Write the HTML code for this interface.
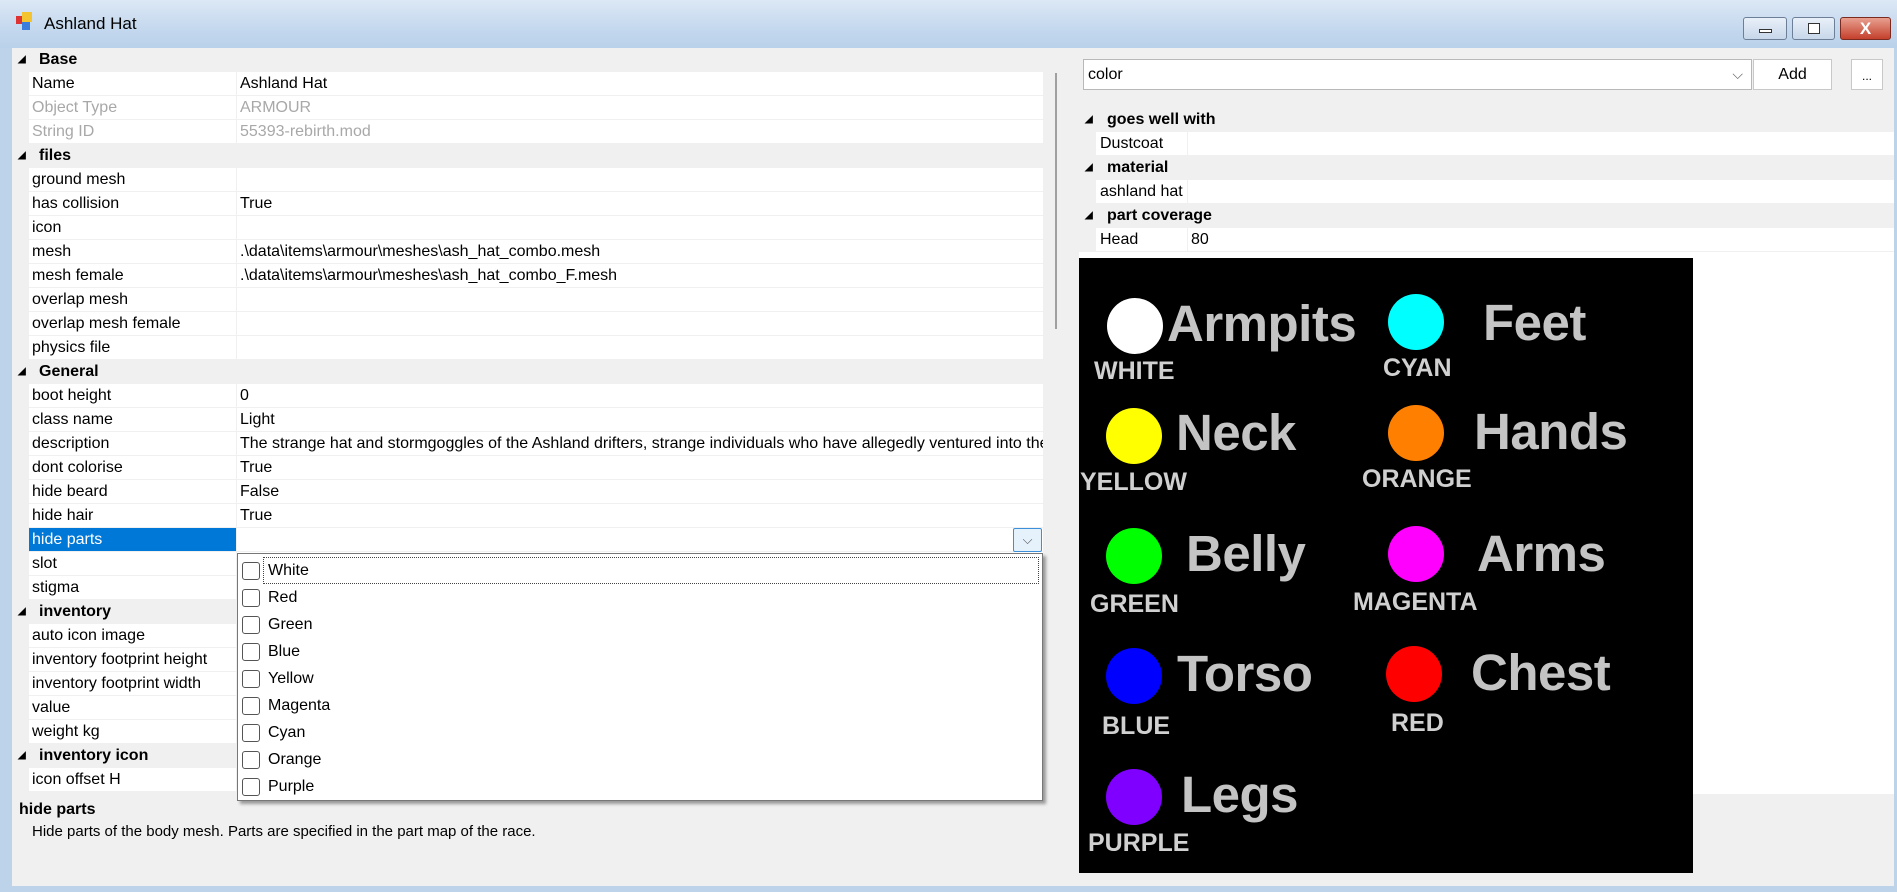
<!DOCTYPE html>
<html><head><meta charset="utf-8"><style>
*{margin:0;padding:0;box-sizing:border-box}
body{width:1897px;height:892px;overflow:hidden;background:#bcd3ea;font-family:"Liberation Sans",sans-serif;font-size:16px;color:#000;position:relative}
.a{position:absolute}
.title{left:0;top:0;width:1897px;height:48px;background:linear-gradient(#dce8f5,#c4d8ee 60%,#b9d1ea)}
.client{left:12px;top:48px;width:1882px;height:838px;background:#f0f0f0}
.row{position:absolute;left:14px;width:1029px;height:24px;line-height:23px}
.cat{background:#f0f0f0;font-weight:bold}
.cat .tri{position:absolute;left:4px;top:0;font-size:10px}
.cat .t{position:absolute;left:25px}
.prop .l{position:absolute;left:15px;width:207px;height:23px;background:#fff;padding-left:3px;white-space:nowrap;overflow:hidden}
.prop .v{position:absolute;left:223px;width:806px;height:23px;background:#fff;padding-left:3px;white-space:nowrap;overflow:hidden}
.g{color:#a8a8a8}
.rrow{position:absolute;left:1079px;width:815px;height:24px;line-height:23px}
.rrow.cat .t{left:28px}
.rrow .l{position:absolute;left:17px;width:91px;height:23px;background:#fff;padding-left:4px}
.rrow .v{position:absolute;left:109px;width:706px;height:23px;background:#fff;padding-left:3px}
.big{position:absolute;color:#c4c4c4;font-size:51px;line-height:51px;font-weight:bold;letter-spacing:-0.5px}
.sm{position:absolute;color:#d0d0d0;font-size:25px;line-height:25px;font-weight:bold}
.c{position:absolute;width:56px;height:56px;border-radius:50%}
.it{position:absolute;left:4px;height:27px;line-height:27px;padding-left:26px;font-size:16px}
.it:before{content:"";position:absolute;left:0;top:5px;width:16px;height:16px;border:1px solid #555;border-radius:3px;background:#fff}
.wb{position:absolute;top:17px;height:23px;border:1px solid #6d7f97;border-radius:3px;background:linear-gradient(#e9f0f8,#c7d7ea)}
</style></head><body>
<div class="a title"></div>
<div class="a" style="left:16px;top:16px;width:8px;height:8px;background:#d33"></div>
<div class="a" style="left:22px;top:12px;width:10px;height:10px;background:#f4c430"></div>
<div class="a" style="left:22px;top:22px;width:8px;height:8px;background:#3b7ddd"></div>
<div class="a" style="left:44px;top:14px;font-size:17px;line-height:20px">Ashland Hat</div>
<div class="wb" style="left:1743px;width:44px"><div class="a" style="left:15px;top:11px;width:13px;height:4px;border:1px solid #333;background:#fff"></div></div>
<div class="wb" style="left:1792px;width:43px"><div class="a" style="left:15px;top:5px;width:12px;height:11px;border:1px solid #333;background:#fff"></div></div>
<div class="wb" style="left:1840px;width:51px;background:linear-gradient(#e8a090,#c4402c);border-color:#7a2a1e;color:#fff;font-weight:bold;text-align:center;line-height:21px;font-size:17px">X</div>
<div class="a client"></div>

<!-- left grid -->
<div class="row cat" style="top:48px"><span class="tri">◢</span><span class="t">Base</span></div>
<div class="row prop" style="top:72px"><div class="l">Name</div><div class="v">Ashland Hat</div></div>
<div class="row prop g" style="top:96px"><div class="l">Object Type</div><div class="v">ARMOUR</div></div>
<div class="row prop g" style="top:120px"><div class="l">String ID</div><div class="v">55393-rebirth.mod</div></div>
<div class="row cat" style="top:144px"><span class="tri">◢</span><span class="t">files</span></div>
<div class="row prop" style="top:168px"><div class="l">ground mesh</div><div class="v"></div></div>
<div class="row prop" style="top:192px"><div class="l">has collision</div><div class="v">True</div></div>
<div class="row prop" style="top:216px"><div class="l">icon</div><div class="v"></div></div>
<div class="row prop" style="top:240px"><div class="l">mesh</div><div class="v">.\data\items\armour\meshes\ash_hat_combo.mesh</div></div>
<div class="row prop" style="top:264px"><div class="l">mesh female</div><div class="v">.\data\items\armour\meshes\ash_hat_combo_F.mesh</div></div>
<div class="row prop" style="top:288px"><div class="l">overlap mesh</div><div class="v"></div></div>
<div class="row prop" style="top:312px"><div class="l">overlap mesh female</div><div class="v"></div></div>
<div class="row prop" style="top:336px"><div class="l">physics file</div><div class="v"></div></div>
<div class="row cat" style="top:360px"><span class="tri">◢</span><span class="t">General</span></div>
<div class="row prop" style="top:384px"><div class="l">boot height</div><div class="v">0</div></div>
<div class="row prop" style="top:408px"><div class="l">class name</div><div class="v">Light</div></div>
<div class="row prop" style="top:432px"><div class="l">description</div><div class="v">The strange hat and stormgoggles of the Ashland drifters, strange individuals who have allegedly ventured into the</div></div>
<div class="row prop" style="top:456px"><div class="l">dont colorise</div><div class="v">True</div></div>
<div class="row prop" style="top:480px"><div class="l">hide beard</div><div class="v">False</div></div>
<div class="row prop" style="top:504px"><div class="l">hide hair</div><div class="v">True</div></div>
<div class="row prop" style="top:528px"><div class="l" style="background:#0078d7;color:#fff">hide parts</div><div class="v"></div></div>
<div class="a" style="left:1013px;top:528px;width:29px;height:24px;border:1px solid #3c8fd8;background:#e5f1fb;border-radius:2px;color:#555;text-align:center;line-height:22px;font-size:13px">⌵</div>
<div class="row prop" style="top:552px"><div class="l">slot</div><div class="v"></div></div>
<div class="row prop" style="top:576px"><div class="l">stigma</div><div class="v"></div></div>
<div class="row cat" style="top:600px"><span class="tri">◢</span><span class="t">inventory</span></div>
<div class="row prop" style="top:624px"><div class="l">auto icon image</div><div class="v"></div></div>
<div class="row prop" style="top:648px"><div class="l">inventory footprint height</div><div class="v"></div></div>
<div class="row prop" style="top:672px"><div class="l">inventory footprint width</div><div class="v"></div></div>
<div class="row prop" style="top:696px"><div class="l">value</div><div class="v"></div></div>
<div class="row prop" style="top:720px"><div class="l">weight kg</div><div class="v"></div></div>
<div class="row cat" style="top:744px"><span class="tri">◢</span><span class="t">inventory icon</span></div>
<div class="row prop" style="top:768px"><div class="l">icon offset H</div><div class="v"></div></div>

<!-- dropdown list -->
<div class="a" style="left:237px;top:553px;width:806px;height:248px;background:#fff;border:1px solid #777;box-shadow:3px 3px 3px #999">
<div class="a" style="left:25px;top:3px;width:776px;height:27px;border:1px dotted #444"></div>
<div class="it" style="top:3px">White</div>
<div class="it" style="top:30px">Red</div>
<div class="it" style="top:57px">Green</div>
<div class="it" style="top:84px">Blue</div>
<div class="it" style="top:111px">Yellow</div>
<div class="it" style="top:138px">Magenta</div>
<div class="it" style="top:165px">Cyan</div>
<div class="it" style="top:192px">Orange</div>
<div class="it" style="top:219px">Purple</div>
</div>

<div class="a" style="left:1055px;top:73px;width:2px;height:256px;background:#a0a0a0"></div>

<div class="a" style="left:19px;top:800px;font-weight:bold;line-height:20px">hide parts</div>
<div class="a" style="left:32px;top:823px;font-size:15px;line-height:18px">Hide parts of the body mesh. Parts are specified in the part map of the race.</div>

<!-- right panel -->
<div class="a" style="left:1083px;top:59px;width:669px;height:31px;background:#fff;border:1px solid #b8b8b8;line-height:29px;padding-left:4px">color<span class="a" style="right:8px;top:0;color:#666;font-size:14px">⌵</span></div>
<div class="a" style="left:1753px;top:59px;width:79px;height:31px;background:#fff;border:1px solid #c8c8c8;text-align:center;line-height:29px">Add</div>
<div class="a" style="left:1851px;top:59px;width:32px;height:31px;background:#fff;border:1px solid #c8c8c8;text-align:center;line-height:33px;font-size:12px">...</div>

<div class="a" style="left:1079px;top:252px;width:815px;height:542px;background:#fff"></div>
<div class="rrow cat" style="top:108px"><span class="tri" style="position:absolute;left:6px;font-size:10px">◢</span><span class="t" style="position:absolute">goes well with</span></div>
<div class="rrow" style="top:132px"><div class="l">Dustcoat</div><div class="v"></div></div>
<div class="rrow cat" style="top:156px"><span class="tri" style="position:absolute;left:6px;font-size:10px">◢</span><span class="t" style="position:absolute">material</span></div>
<div class="rrow" style="top:180px"><div class="l">ashland hat</div><div class="v"></div></div>
<div class="rrow cat" style="top:204px"><span class="tri" style="position:absolute;left:6px;font-size:10px">◢</span><span class="t" style="position:absolute">part coverage</span></div>
<div class="rrow" style="top:228px"><div class="l">Head</div><div class="v">80</div></div>

<!-- image -->
<div class="a" style="left:1079px;top:258px;width:614px;height:615px;background:#000">
<div class="c" style="left:28px;top:40px;background:#fff"></div>
<div class="c" style="left:309px;top:36px;background:#0ff"></div>
<div class="c" style="left:27px;top:150px;background:#ff0"></div>
<div class="c" style="left:309px;top:147px;background:#ff8000"></div>
<div class="c" style="left:27px;top:270px;background:#0f0"></div>
<div class="c" style="left:309px;top:268px;background:#f0f"></div>
<div class="c" style="left:27px;top:390px;background:#00f"></div>
<div class="c" style="left:307px;top:388px;background:#f00"></div>
<div class="c" style="left:27px;top:511px;background:#8000ff"></div>
<div class="big" style="left:88px;top:40px">Armpits</div>
<div class="big" style="left:404px;top:39px">Feet</div>
<div class="big" style="left:97px;top:149px">Neck</div>
<div class="big" style="left:395px;top:148px">Hands</div>
<div class="big" style="left:107px;top:270px">Belly</div>
<div class="big" style="left:398px;top:270px">Arms</div>
<div class="big" style="left:98px;top:390px">Torso</div>
<div class="big" style="left:392px;top:389px">Chest</div>
<div class="big" style="left:102px;top:511px">Legs</div>
<div class="sm" style="left:15px;top:101px">WHITE</div>
<div class="sm" style="left:304px;top:98px">CYAN</div>
<div class="sm" style="left:1px;top:212px">YELLOW</div>
<div class="sm" style="left:283px;top:209px">ORANGE</div>
<div class="sm" style="left:11px;top:334px">GREEN</div>
<div class="sm" style="left:274px;top:332px">MAGENTA</div>
<div class="sm" style="left:23px;top:456px">BLUE</div>
<div class="sm" style="left:312px;top:453px">RED</div>
<div class="sm" style="left:9px;top:573px">PURPLE</div>
</div>
</body></html>
